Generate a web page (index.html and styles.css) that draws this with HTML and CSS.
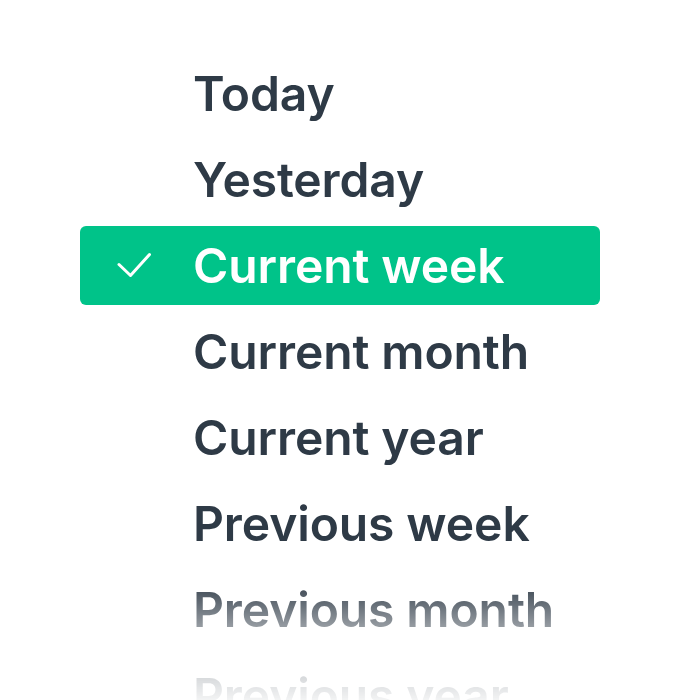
FILE: index.html
```html
<!DOCTYPE html>
<html>
<head>
<meta charset="utf-8">
<link rel="stylesheet" href="styles.css">
</head>
<body>
<ul class="menu">
  <li class="item"><span class="check"></span><span class="label">Today</span></li>
  <li class="item"><span class="check"></span><span class="label">Yesterday</span></li>
  <li class="item selected"><span class="check"><svg width="34" height="26" viewBox="0 0 34 26"><path d="M2 12.5 L13.5 23.5 L32.5 2.5" fill="none" stroke="#fff" stroke-width="3" stroke-linecap="round" stroke-linejoin="round"/></svg></span><span class="label">Current week</span></li>
  <li class="item"><span class="check"></span><span class="label">Current month</span></li>
  <li class="item"><span class="check"></span><span class="label">Current year</span></li>
  <li class="item"><span class="check"></span><span class="label">Previous week</span></li>
  <li class="item"><span class="check"></span><span class="label">Previous month</span></li>
  <li class="item"><span class="check"></span><span class="label">Previous year</span></li>
</ul>
</body>
</html>
```
FILE: styles.css
```css
html, body {
  margin: 0;
  padding: 0;
  background: #ffffff;
  height: 700px;
  overflow: hidden;
}
.menu {
  list-style: none;
  margin: 0 0 0 80px;
  padding: 54px 0 0 0;
  width: 520px;
  height: 700px;
  overflow: hidden;
  box-sizing: border-box;
  display: flex;
  flex-direction: column;
  gap: 7px;
  font-family: Inter, "Noto Sans", sans-serif;
  font-weight: 600;
  font-size: 48px;
  letter-spacing: -0.1px;
  color: #2e3a46;
  -webkit-mask-image: linear-gradient(to bottom, #000 0, #000 578px, rgba(0,0,0,0.45) 632px, rgba(0,0,0,0.06) 700px);
  mask-image: linear-gradient(to bottom, #000 0, #000 578px, rgba(0,0,0,0.45) 632px, rgba(0,0,0,0.06) 700px);
}
.item {
  height: 79px;
  display: flex;
  align-items: center;
  border-radius: 6px;
  flex-shrink: 0;
}
.check {
  width: 113px;
  display: flex;
  justify-content: flex-start;
  padding-left: 37px;
  box-sizing: border-box;
  flex-shrink: 0;
}
.check svg { display: block; margin-top: -2px; }
.label {
  white-space: nowrap;
  line-height: 1;
}
.selected {
  background: #00c389;
  color: #ffffff;
}
```
